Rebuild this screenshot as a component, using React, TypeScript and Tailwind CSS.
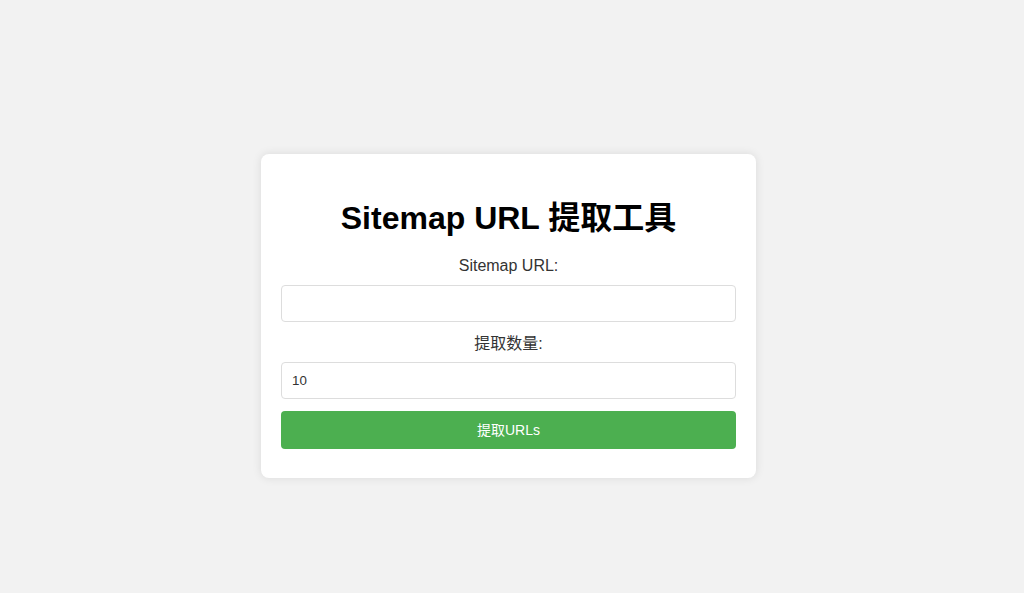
export default function App() {
  return (
    <div
      className="min-h-screen bg-[#f2f2f2] flex justify-center pr-[7px] pt-[154px]"
      style={{ fontFamily: '"Liberation Sans", Arial, "Noto Sans CJK SC", sans-serif' }}
    >
      <div className="w-[495px] h-fit bg-white rounded-lg shadow-[0_0_10px_rgba(0,0,0,0.1)] px-[20px] pt-[20px] pb-[29px] text-center">
        <h1 className="text-[32px] font-bold leading-[46px] text-black mt-[21px] mb-[13px]">
          Sitemap URL 提取工具
        </h1>

        <label className="block text-[16px] leading-[23px] text-[#333] mb-[8px]">Sitemap URL:</label>
        <input
          type="text"
          className="block w-full h-[37px] border border-[#ddd] rounded-[4px] px-[10px] text-[13.33px] text-[#333] outline-none mb-[10px]"
        />

        <label className="block text-[16px] leading-[23px] text-[#333] mb-[7px]">提取数量:</label>
        <input
          type="text"
          defaultValue="10"
          className="block w-full h-[37px] border border-[#ddd] rounded-[4px] px-[10px] text-[13.33px] text-[#333] outline-none mb-[12px]"
        />

        <button className="block w-full h-[38px] bg-[#4caf50] text-white text-[14px] rounded-[4px]">
          提取URLs
        </button>
      </div>
    </div>
  );
}
